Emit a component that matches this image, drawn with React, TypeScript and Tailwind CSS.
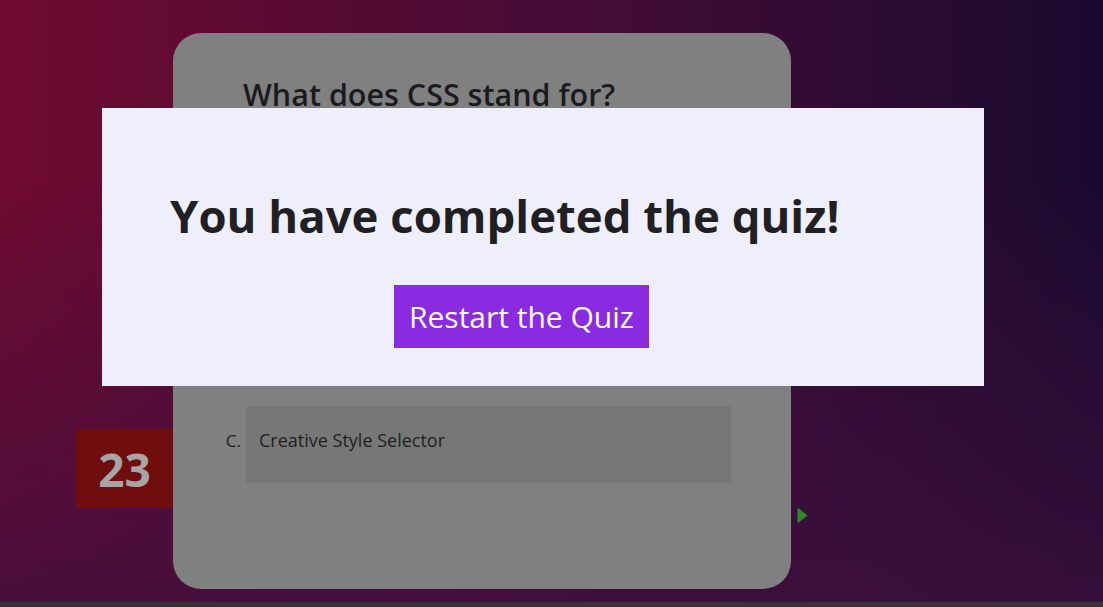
import React from 'react';

const options = [
  { letter: 'A.', text: 'Cascading Style Sheets' },
  { letter: 'B.', text: 'Computer Style Sheets' },
  { letter: 'C.', text: 'Creative Style Selector' },
];

const App: React.FC = () => {
  return (
    <div className="relative h-[607px] w-full overflow-hidden flex flex-col font-['Open_Sans','Noto_Sans',sans-serif]">
      {/* quiz page, dimmed by the overlay */}
      <div className="flex-1 flex items-start pl-[76px] pt-[33px] bg-[linear-gradient(to_bottom,rgba(0,0,0,0)_30%,rgba(62,16,62,0.75)),linear-gradient(to_right,#6f0a30,#3e0c36_60%,#1a0a2f)]">
        {/* timer */}
        <div className="mt-[396px] w-[97px] h-[79px] bg-[#700e0f] flex items-center justify-center">
          <span className="text-[46px] font-bold text-[#a6a6a6] leading-none">23</span>
        </div>

        {/* question card */}
        <div className="w-[618px] h-[556px] rounded-[28px] bg-[#808080] pt-[39px]">
          <h2 className="pl-[70px] text-[30.5px] font-semibold text-[#1b1b1f] leading-[44px]">
            What does CSS stand for?
          </h2>
          <div className="mt-[44px] flex flex-col gap-[46px]">
            {options.map((o) => (
              <div key={o.letter} className="flex items-start">
                <span className="w-[73px] pr-[5px] pt-[23px] text-right text-[17px] text-[#1f1f1f] leading-[23px]">
                  {o.letter}
                </span>
                <div className="w-[485px] h-[77px] bg-[#777777] pl-[13px] pt-[23px] text-[18px] text-[#1f1f1f] leading-[23px]">
                  {o.text}
                </div>
              </div>
            ))}
          </div>
        </div>

        {/* next arrow */}
        <svg className="ml-[6px] mt-[474px]" width="11" height="17" viewBox="0 0 11 17">
          <path d="M1 1.5 L10 8.5 L1 15.5 Z" fill="#2a8a2c" stroke="#2a8a2c" strokeLinejoin="round" />
        </svg>
      </div>
      <div className="h-[5px] bg-[#34343a]" />

      {/* result modal */}
      <div className="absolute left-[102px] top-[108px] w-[882px] h-[278px] bg-[#eeeffb] pl-[68px] pt-[79px]">
        <h1 className="text-[45.5px] font-bold text-[#1f1f24] leading-[56px]">You have completed the quiz!</h1>
        <button className="mt-[42px] ml-[224px] h-[63px] px-[15px] bg-[#8a2be2] text-white text-[30px] leading-none">
          Restart the Quiz
        </button>
      </div>
    </div>
  );
};

export default App;
